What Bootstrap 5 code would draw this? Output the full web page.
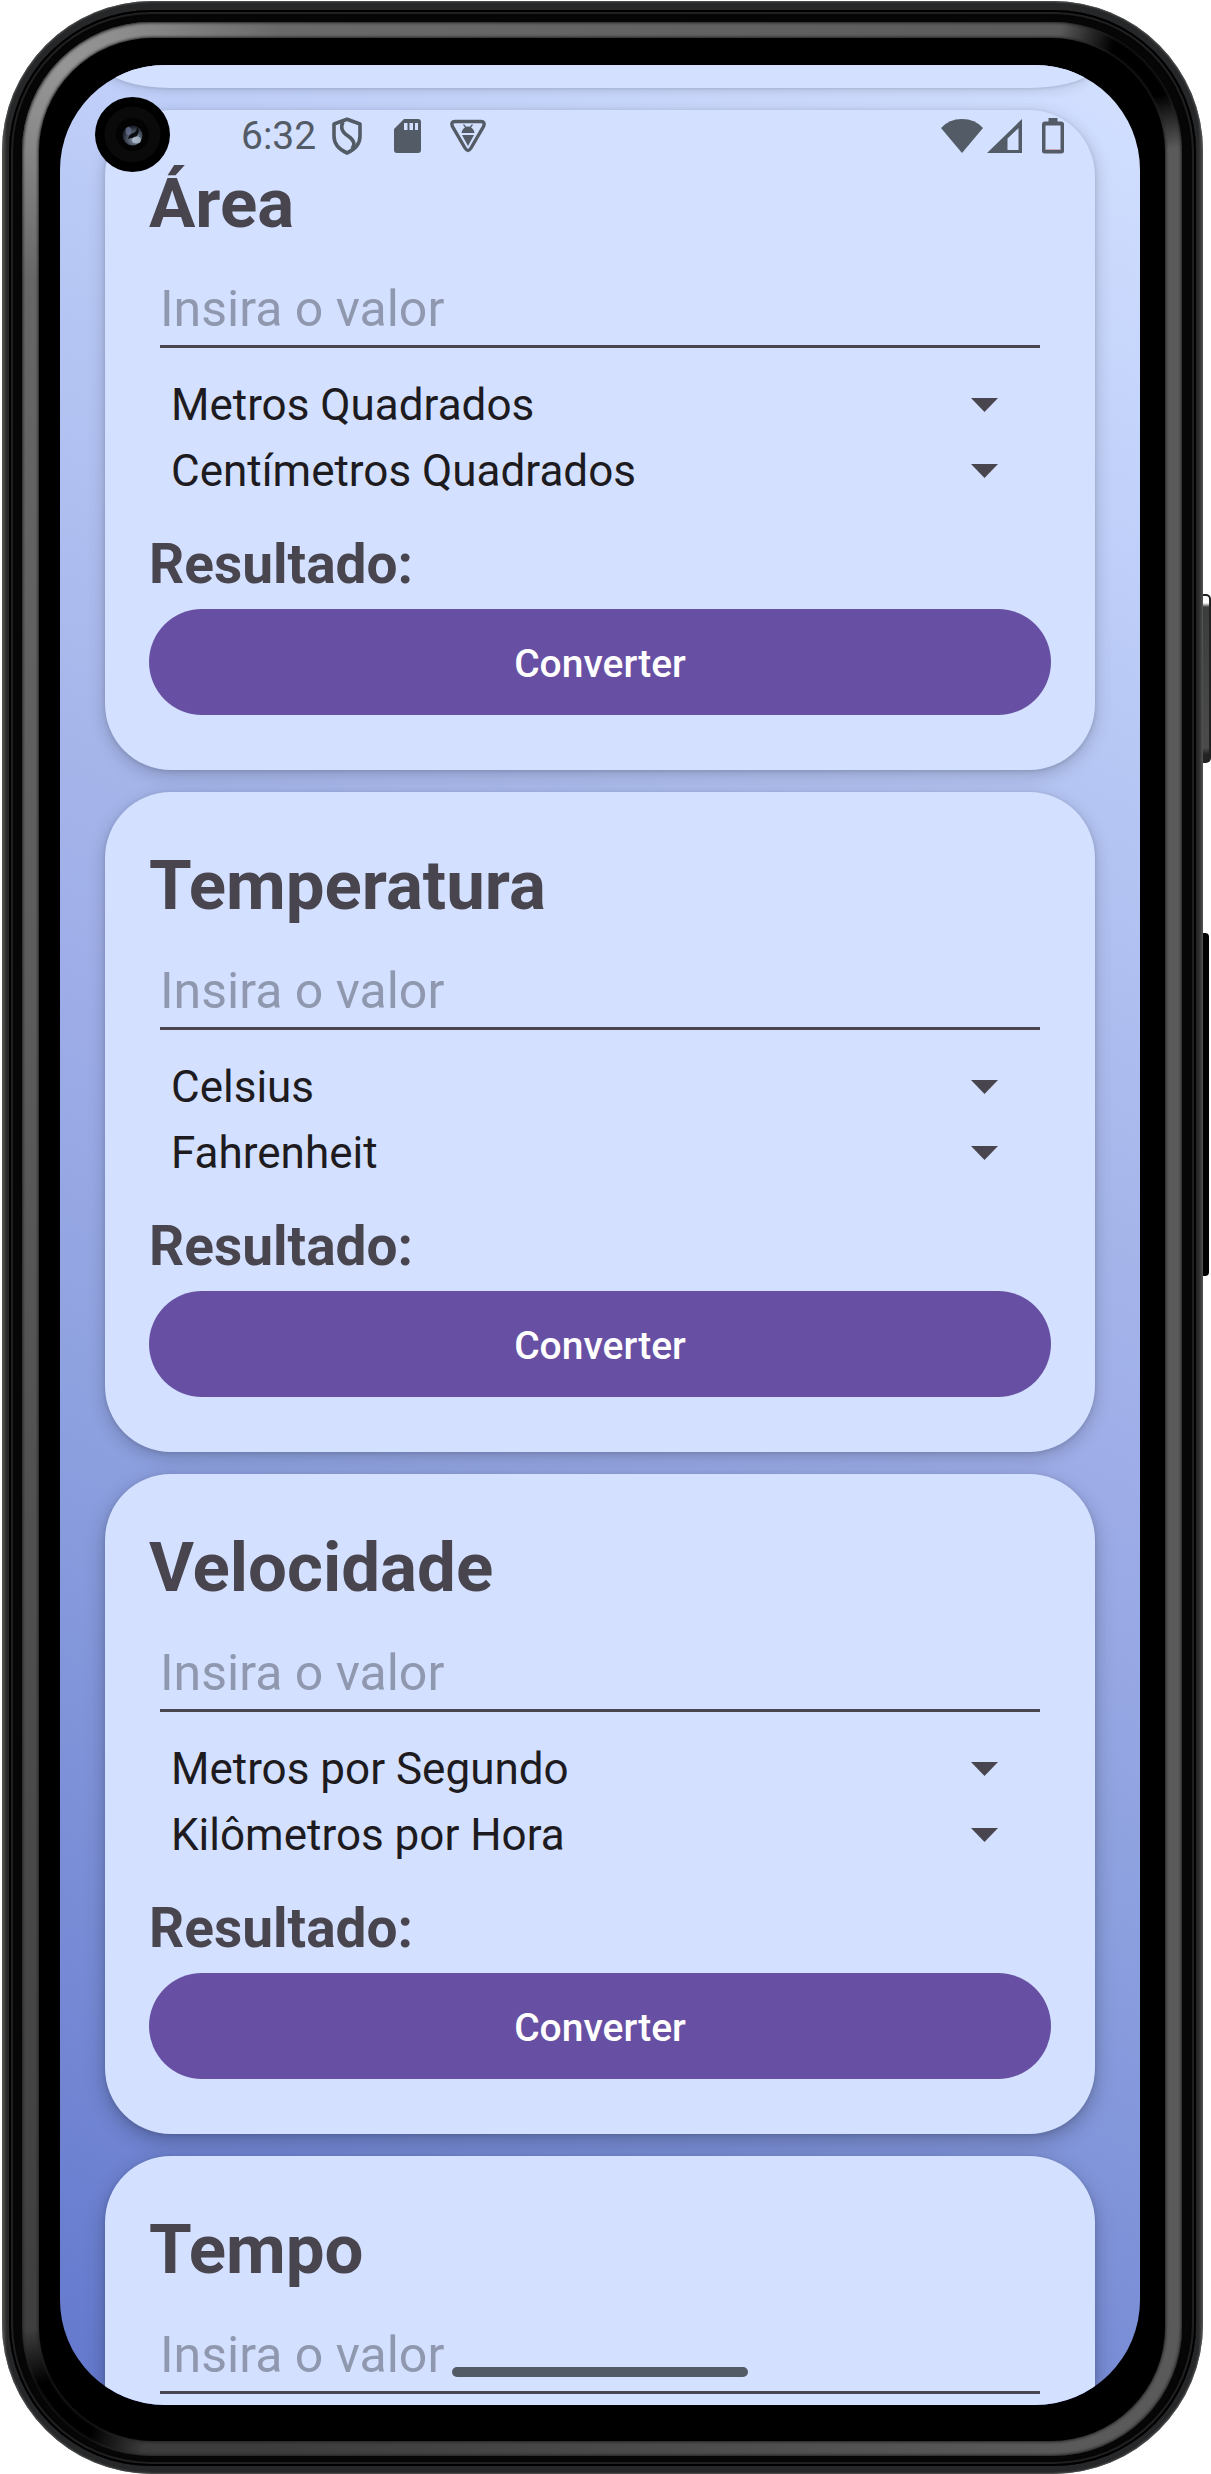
<!DOCTYPE html>
<html lang="pt-BR">
<head>
<meta charset="utf-8">
<meta name="viewport" content="width=device-width, initial-scale=1">
<title>Conversor de Unidades</title>
<link href="https://cdn.jsdelivr.net/npm/bootstrap@5.3.0/dist/css/bootstrap.min.css" rel="stylesheet">
<style>
  body { background: #fff; font-family: Roboto, "Noto Sans", sans-serif; }

  /* Phone body: each layer wraps the next one */
  .device { padding: 1px 8px 0 2px; }
  .layer-edge {
    padding: 9px 7px 8px; border-radius: 150px;
    background: linear-gradient(90deg, #55564f 0, #262728 5px, #262728 calc(100% - 5px), #4a4a4a 100%);
    box-shadow: inset 0 0 2px 1px #555;
  }
  .layer-groove {
    padding: 12px 14px 10px 13px; border-radius: 142px; background: #060606;
    box-shadow: inset 0 0 0 2px #000, inset 0 0 1px 4px #222, inset 0 0 0 6px #050505;
  }
  .layer-gloss {
    padding: 16px 17px 15px; border-radius: 129px;
    background:
      radial-gradient(circle at calc(100% - 30px) 34px, #000 0, #000 40px, transparent 95px),
      radial-gradient(circle at 30px calc(100% - 34px), #000 0, #000 40px, transparent 95px),
      radial-gradient(circle at 40px 40px, #969696 0, #8e8e8e 60px, transparent 220px),
      linear-gradient(90deg, transparent 20%, #5a5a5a 90%),
      linear-gradient(180deg, #6a6a6a, #5c5c5c 40%, #3c3c3c);
    box-shadow: inset 0 0 3px 1px #222;
  }
  .layer-face { padding: 27px 25px 36px 21px; border-radius: 114px; background: #000; box-shadow: 0 0 3px 1px #222; }
  .side-key { right: 0; width: 8px; }
  .key-power { top: 594px; height: 169px; border-radius: 0 5px 5px 0; border: 2px solid #222; border-left: 0; background: linear-gradient(180deg, #fff 0, #fff 7px, #3a3d3c 11px, #4b4b4b 92%, #222 96%); }
  .key-volume { top: 933px; height: 343px; width: 6px; margin-right: 2px; border-radius: 0 4px 4px 0; background: #030303; }

  .app-screen {
    border-radius: 105px;
    background: linear-gradient(204.8deg, #d3e0ff 0%, #bfcff9 17.5%, #a5b5ea 41.7%, #9eade8 50%, #8fa2e0 63%, #6378cd 100%);
  }
  .status-bar { height: 142px; padding: 0 76px 0 181px; color: #535b66; font-size: 39px; line-height: 44px; }
  .battery-icon { margin-left: 20px; }
  .lens { left: 35px; top: 32px; }
  .home-pill { bottom: 28px; width: 296px; height: 10px; background: #535b66; }

  /* Converter cards */
  .unit-list { gap: 22px; padding: 0 45px; }
  .unit-card { flex: none; padding: 55px 44px; border-radius: 66px; background: #d3e0ff; color: #49454f; box-shadow: 0 5px 18px rgba(0,0,0,.2), 0 1px 4px rgba(0,0,0,.12); }
  .unit-card-low { box-shadow: 0 7px 20px rgba(0,0,0,.26), 0 1px 4px rgba(0,0,0,.12); }
  .unit-card-end { height: 23px; padding: 0; border-radius: 0 0 66px 66px / 0 0 23px 23px; box-shadow: 0 3px 12px rgba(0,0,0,.12), 0 1px 3px rgba(0,0,0,.1); }
  .unit-title { font-size: 69px; line-height: 78px; font-weight: 700; }
  .unit-value {
    height: 105px; padding: 30px 0 0; margin: 0 11px 24px; width: auto; align-self: stretch;
    border: 0; border-bottom: 3px solid #49454f; border-radius: 0; background: none;
    font-size: 50px; line-height: 60px; color: #1d1b20;
  }
  .unit-value:focus { background: none; box-shadow: none; border-color: #6750a4; }
  .unit-value::placeholder { color: #8f98ae; opacity: 1; }
  .unit-select {
    height: 66px; padding: 0 100px 0 22px; border: 0; border-radius: 0; color: #1d1b20;
    font-size: 44px; line-height: 66px;
    background: url("data:image/svg+xml,%3Csvg xmlns='http://www.w3.org/2000/svg' viewBox='0 0 27 14'%3E%3Cpath fill='%2349454f' d='M0 0h27L13.500 14z'/%3E%3C/svg%3E") no-repeat right 53px center / 27px 14px;
  }
  .unit-result { margin: 28px 0 13px; font-size: 55px; line-height: 64px; font-weight: 700; }
  .unit-btn { height: 106px; padding: 5px 0 0; border: 0; background: #6750a3; color: #fff; font-size: 39px; font-weight: 500; }
  .unit-btn:hover { background: #5a4591; color: #fff; }
</style>
<script src="https://cdn.jsdelivr.net/npm/bootstrap@5.3.0/dist/js/bootstrap.bundle.min.js"></script>
</head>
<body>
<div class="device vh-100 position-relative overflow-hidden d-flex">
  <span class="side-key key-power position-absolute"></span>
  <span class="side-key key-volume position-absolute"></span>
  <div class="layer-edge d-flex flex-fill">
  <div class="layer-groove d-flex flex-fill">
  <div class="layer-gloss d-flex flex-fill">
  <div class="layer-face d-flex flex-fill">
    <div class="app-screen position-relative overflow-hidden flex-fill">

      <main class="unit-list d-flex flex-column h-100 overflow-hidden">
        <div class="unit-card unit-card-end"></div>

        <form class="unit-card d-flex flex-column">
          <h2 class="unit-title mb-0">Área</h2>
          <input class="unit-value form-control" type="text" inputmode="decimal" placeholder="Insira o valor" aria-label="Valor de área">
          <select class="unit-select form-select" aria-label="Converter área de"><option>Metros Quadrados</option></select>
          <select class="unit-select form-select" aria-label="Converter área para"><option>Centímetros Quadrados</option></select>
          <p class="unit-result">Resultado:</p>
          <button class="unit-btn btn rounded-pill w-100" type="button">Converter</button>
        </form>

        <form class="unit-card d-flex flex-column">
          <h2 class="unit-title mb-0">Temperatura</h2>
          <input class="unit-value form-control" type="text" inputmode="decimal" placeholder="Insira o valor" aria-label="Valor de temperatura">
          <select class="unit-select form-select" aria-label="Converter temperatura de"><option>Celsius</option><option>Fahrenheit</option></select>
          <select class="unit-select form-select" aria-label="Converter temperatura para"><option>Fahrenheit</option><option>Celsius</option></select>
          <p class="unit-result">Resultado:</p>
          <button class="unit-btn btn rounded-pill w-100" type="button">Converter</button>
        </form>

        <form class="unit-card unit-card-low d-flex flex-column">
          <h2 class="unit-title mb-0">Velocidade</h2>
          <input class="unit-value form-control" type="text" inputmode="decimal" placeholder="Insira o valor" aria-label="Valor de velocidade">
          <select class="unit-select form-select" aria-label="Converter velocidade de"><option>Metros por Segundo</option></select>
          <select class="unit-select form-select" aria-label="Converter velocidade para"><option>Kilômetros por Hora</option></select>
          <p class="unit-result">Resultado:</p>
          <button class="unit-btn btn rounded-pill w-100" type="button">Converter</button>
        </form>

        <form class="unit-card unit-card-low d-flex flex-column">
          <h2 class="unit-title mb-0">Tempo</h2>
          <input class="unit-value form-control" type="text" inputmode="decimal" placeholder="Insira o valor" aria-label="Valor de tempo">
        </form>
      </main>

      <div class="status-bar position-absolute top-0 start-0 w-100 d-flex align-items-center">
        <span class="me-3">6:32</span>
        <svg width="30" height="38" viewBox="0 0 30 38" fill="none" stroke="currentColor" stroke-width="3.600" stroke-linejoin="round" aria-hidden="true">
          <path d="M15 2.300 28 7v12c0 8-5 13.500-13 17C7 32.500 2 27 2 19V7z"/>
          <path d="M11 5C8 11 10 15 16 19c7 4.500 7 9 4 13"/>
        </svg>
        <svg class="ms-4 me-1" width="36" height="36" viewBox="0 0 36 36" aria-hidden="true">
          <path fill="currentColor" fill-rule="evenodd" d="M18 1h14q3 0 3 3v28q0 3-3 3H11q-3 0-3-3V11zM18 5v7h3.500V5zm5.500 0v7H27V5zM29 5v7h3V5z"/>
        </svg>
        <svg class="ms-4" width="36" height="34" viewBox="0 0 36 34" aria-hidden="true">
          <path d="M5 2.500h26q4.500 0 2.500 5L21 29q-3 5-6 0L2.500 7.500q-2-5 2.500-5z" fill="none" stroke="currentColor" stroke-width="3.400"/>
          <path fill="currentColor" d="M11.500 14q.5-4 3.500-5.500L13 6l1-.8 2.300 2.600q1.700-.5 3.400 0L22 5.200l1 .8-2 2.500q3 1.500 3.500 5.500zM12 16h12l-6 11z"/>
        </svg>
        <svg class="ms-auto" width="42" height="36" viewBox="0 0 42 36" aria-hidden="true">
          <path fill="currentColor" d="M0 10Q8 1 21 1t21 9L21 35z"/>
        </svg>
        <svg class="ms-1" width="35" height="36" viewBox="0 0 35 36" aria-hidden="true">
          <path fill="currentColor" fill-rule="evenodd" d="M35 1v34H0zM31.500 10 20.500 20.500V32h11z"/>
        </svg>
        <svg class="battery-icon" width="22" height="36" viewBox="0 0 22 36" aria-hidden="true">
          <path fill="currentColor" fill-rule="evenodd" d="M6.500 0h9v3.500H19q3 0 3 3V33q0 2.500-3 2.500H3Q0 35.500 0 33V6.500q0-3 3-3h3.500zM3.500 7.500v24h15v-24z"/>
          <path d="M3.500 31.500h15" stroke="#c9a6b4"/>
        </svg>
      </div>

      <svg class="lens position-absolute" width="75" height="75" viewBox="0 0 75 75" aria-hidden="true">
        <defs><radialGradient id="glass" cx=".6" cy=".65" r=".6"><stop offset="0" stop-color="#8fa0b4"/><stop offset=".5" stop-color="#56606f"/><stop offset="1" stop-color="#1b1f2c"/></radialGradient></defs>
        <circle cx="37.500" cy="37.500" r="37.500"/>
        <circle cx="37.500" cy="37.500" r="28" fill="#0a0a0a"/>
        <circle cx="37.500" cy="37.500" r="16.500" fill="#030303"/>
        <circle cx="37.500" cy="38.500" r="10" fill="url(#glass)"/>
        <path d="M33 42q1-5 5-6t4-6q3 3 1 7t-5 4-5 1z" fill="#0a0c10"/>
        <ellipse cx="41.500" cy="43" rx="4.500" ry="3.500" fill="#b9c9d8" opacity=".7"/>
        <ellipse cx="33.500" cy="34" rx="3" ry="4" fill="#66708f" opacity=".8"/>
      </svg>

      <div class="home-pill position-absolute start-50 translate-middle-x rounded-pill"></div>
    </div>
  </div>
  </div>
  </div>
  </div>
</div>
</body>
</html>
